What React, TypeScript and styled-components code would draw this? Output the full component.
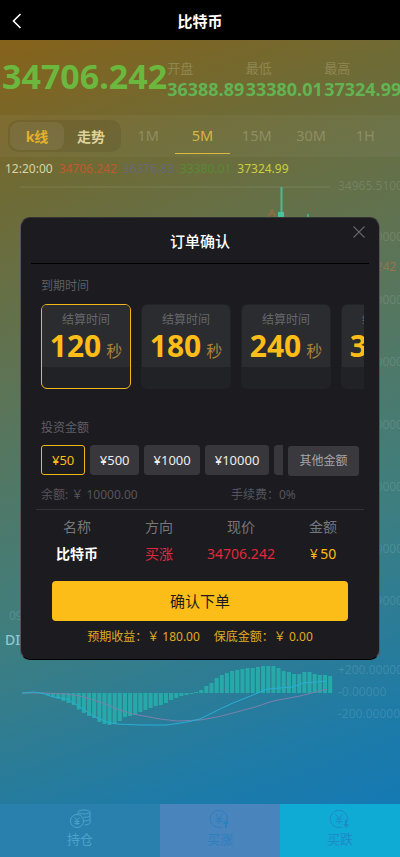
import React from "react";
import styled, { createGlobalStyle } from "styled-components";

const GlobalStyle = createGlobalStyle`
  html, body {
    margin: 0;
    padding: 0;
    background: #000;
  }
  * {
    box-sizing: border-box;
  }
  body {
    font-family: "Noto Sans", "Noto Sans CJK SC", sans-serif;
  }
`;

const Page = styled.div`
  position: relative;
  display: flex;
  flex-direction: column;
  width: 400px;
  height: 857px;
  overflow: hidden;
  background: #000;
`;
const Header = styled.div`
  position: relative;
  display: flex;
  align-items: center;
  justify-content: center;
  flex: 0 0 40px;
  color: #fff;
  font-size: 15px;
  font-weight: 700;
`;
const BackIcon = styled.svg`
  position: absolute;
  left: 11px;
  top: 13px;
`;
const Body = styled.div`
  display: flex;
  flex-direction: column;
  flex: 1;
  min-height: 0;
  background: linear-gradient(160deg, #86621a 0%, #6f6b35 16%, #5f7352 34%, #3f7e7e 62%, #1f7ba6 84%, #0f79bb 100%);
`;
const PriceRow = styled.div`
  display: flex;
  flex: 0 0 75px;
  padding: 11px 0 0 2px;
  overflow: hidden;
`;
const BigPrice = styled.div`
  flex: 0 0 165px;
  color: #6cb83f;
  font-size: 34px;
  font-weight: 700;
  line-height: 50px;
  white-space: nowrap;
`;
const Stat = styled.div`
  flex: 0 0 78.5px;
  padding-top: 7px;
`;
const StatLabel = styled.div`
  color: #8f8752;
  font-size: 13px;
  line-height: 20px;
`;
const StatValue = styled.div`
  color: #62b452;
  font-size: 18px;
  font-weight: 700;
  line-height: 23px;
  white-space: nowrap;
`;
const TabRow = styled.div`
  display: flex;
  align-items: stretch;
  flex: 0 0 42px;
  padding-left: 8px;
  background: rgba(255, 255, 255, 0.04);
`;
const Segment = styled.div`
  display: flex;
  align-items: center;
  width: 113px;
  height: 32px;
  margin-top: 5px;
  padding: 0 2px;
  border-radius: 10px;
  background: rgba(60, 50, 20, 0.14);
`;
const SegmentItem = styled.div<{ $active?: boolean }>`
  display: flex;
  align-items: center;
  justify-content: center;
  width: 54px;
  height: 28px;
  padding-bottom: 1px;
  border-radius: 9px;
  background: ${(p) => (p.$active ? "rgba(255, 255, 255, 0.07)" : "transparent")};
  color: ${(p) => (p.$active ? "#e3b12a" : "#ddd29c")};
  font-size: 14px;
  font-weight: 700;
`;
const Period = styled.div<{ $active?: boolean }>`
  display: flex;
  align-items: center;
  justify-content: center;
  width: 54.3px;
  height: 39px;
  padding-top: 2px;
  border-bottom: 1px solid ${(p) => (p.$active ? "#dcb93f" : "transparent")};
  color: ${(p) => (p.$active ? "#dcb440" : "#8f8d62")};
  font-size: 14.5px;
`;
const QuoteRow = styled.div`
  display: flex;
  align-items: center;
  flex: 0 0 22px;
  gap: 6px;
  padding: 0 0 0 5px;
  font-size: 12px;
  white-space: nowrap;
`;
const Quote = styled.span<{ $color: string }>`
  color: ${(p) => p.$color};
`;
const ChartArea = styled.div`
  flex: 1;
  min-height: 0;
`;
const ChartSvg = styled.svg`
  display: block;
  width: 400px;
  height: 625px;
`;
const TabBar = styled.div`
  display: grid;
  grid-template-columns: 160px 120px 120px;
  flex: 0 0 53px;
`;
const TabItem = styled.div<{ $bg: string; $color: string }>`
  display: flex;
  flex-direction: column;
  align-items: center;
  padding-top: 5px;
  background: ${(p) => p.$bg};
  color: ${(p) => p.$color};
  font-size: 13px;
  line-height: 20px;
`;

const Modal = styled.div`
  position: absolute;
  left: 20px;
  top: 217px;
  width: 360px;
  height: 443px;
  padding: 0 10px;
  border: 1px solid #55555a;
  border-bottom-color: #000;
  border-top-color: #333;
  border-radius: 10px;
  background: #1b1b20;
`;
const ModalTitle = styled.div`
  height: 46px;
  border-bottom: 1px solid #000;
  color: #fff;
  font-size: 15px;
  font-weight: 500;
  line-height: 46px;
  text-align: center;
`;
const CloseIcon = styled.svg`
  position: absolute;
  right: 13px;
  top: 7px;
`;
const Section = styled.div`
  padding: 0 0 0 10px;
`;
const SectionLabel = styled.div<{ $gap: number }>`
  padding-top: ${(p) => p.$gap}px;
  color: #5f5f63;
  font-size: 12px;
  line-height: 18px;
`;
const CardScroll = styled.div`
  display: flex;
  gap: 10px;
  width: 323px;
  margin-top: 9px;
  overflow: hidden;
`;
const Card = styled.div<{ $active?: boolean }>`
  flex: 0 0 90px;
  height: 85px;
  overflow: hidden;
  border: 1px solid ${(p) => (p.$active ? "#f0b81a" : "transparent")};
  border-radius: 6px;
  background: #212226;
`;
const CardTop = styled.div`
  display: flex;
  flex-direction: column;
  align-items: center;
  height: 62px;
  padding-top: 6px;
  background: #2b2c30;
  white-space: nowrap;
`;
const CardLabel = styled.div`
  color: #66666a;
  font-size: 12px;
  line-height: 18px;
`;
const CardValue = styled.div`
  margin-top: -1px;
  color: #fdbd18;
  font-size: 30px;
  font-weight: 700;
  line-height: 36px;
`;
const CardUnit = styled.span`
  margin-left: 5px;
  color: #a8843a;
  font-size: 16px;
  font-weight: 400;
`;
const AmountRow = styled.div`
  display: flex;
  align-items: flex-start;
  gap: 5px;
  margin-top: 8px;
`;
const ChipScroll = styled.div`
  display: flex;
  gap: 5px;
  flex: 0 0 242px;
  overflow: hidden;
`;
const Chip = styled.div<{ $active?: boolean }>`
  flex: 0 0 auto;
  height: 30px;
  padding: 0 ${(p) => (p.$active ? 10 : 8.5)}px;
  border: 1px solid ${(p) => (p.$active ? "#f0b81a" : "#37373c")};
  border-radius: 3px;
  background: ${(p) => (p.$active ? "transparent" : "#37373c")};
  color: ${(p) => (p.$active ? "#fdbd18" : "#eee")};
  font-size: 13px;
  line-height: 28px;
`;
const OtherButton = styled.div`
  flex: 0 0 71px;
  height: 30px;
  margin-top: 1px;
  border-radius: 3px;
  background: #39393e;
  color: #a5a5a8;
  font-size: 12px;
  line-height: 30px;
  text-align: center;
`;
const BalanceRow = styled.div`
  display: grid;
  grid-template-columns: 190px 1fr;
  margin-top: 10px;
  color: #55555a;
  font-size: 12px;
  line-height: 18px;
`;
const SummaryTable = styled.div`
  display: grid;
  grid-template-columns: repeat(4, 82px);
  width: 328px;
  margin: 5px 0 0 5px;
  border-top: 1px solid #333338;
  text-align: center;
`;
const SummaryHead = styled.div`
  padding-top: 7px;
  color: #77777b;
  font-size: 14px;
  line-height: 20px;
`;
const SummaryCell = styled.div<{ $color: string; $bold?: boolean }>`
  padding-top: 7px;
  color: ${(p) => p.$color};
  font-size: 14px;
  font-weight: ${(p) => (p.$bold ? 700 : 400)};
  line-height: 20px;
`;
const ConfirmButton = styled.div`
  width: 296px;
  height: 40px;
  margin: 17px 0 0 21px;
  border-radius: 4px;
  background: #fdbd18;
  color: #1b1b20;
  font-size: 15px;
  line-height: 40px;
  text-align: center;
`;
const ModalNote = styled.div`
  display: flex;
  justify-content: center;
  gap: 14px;
  margin-top: 7px;
  color: #e0ac22;
  font-size: 12px;
  line-height: 18px;
`;

const quotes = [
  { text: "12:20:00", color: "#d8d2ac" },
  { text: "34706.242", color: "#bf5a2e" },
  { text: "36376.83", color: "#67687a" },
  { text: "33380.01", color: "#578a35" },
  { text: "37324.99", color: "#c9cf3e" },
];
const periods = ["1M", "5M", "15M", "30M", "1H"];
const expiries = ["120", "180", "240", "300"];
const amounts = ["50", "500", "1000", "10000", "50000"];

// axis labels that stick out beside the dialog
const axisLabels = [
  { y: 191, text: "34965.5100" },
  { y: 242, text: "34816.0000" },
  { y: 305, text: "34666.0000" },
  { y: 367, text: "34516.0000" },
  { y: 430, text: "34366.0000" },
  { y: 492, text: "34216.0000" },
  { y: 554, text: "34066.0000" },
  { y: 606, text: "33916.9000" },
  { y: 675, text: "+200.00000" },
  { y: 697, text: "-0.00000" },
  { y: 719, text: "-200.00000" },
];
const macdDown = [2.5, 4, 5.6, 8, 10, 12, 16.5, 20, 23, 25, 29, 31, 32, 31, 28, 24, 23, 22, 19, 17, 15, 13, 12, 10, 7, 5, 3, 2, 1];
const macdUp = [1, 3, 7, 10, 15, 18, 20, 22, 23, 24, 25, 25, 26, 27, 27, 27, 25, 22, 21, 19, 19, 21, 21, 19, 18, 18, 17];
const difLine = "M22 694 L35 693 L45 695 L53 698 L67 700 L80 708 L93 717 L107 723 L117 725 L140 726 L167 726 L187 723 L200 720 L220 710 L233 704 L253 696 L267 690 L280 689 L293 688 L303 684 L327 682";
const deaLine = "M22 694 L45 694 L67 695 L80 697 L100 703 L117 710 L133 715 L160 720 L177 722 L200 721 L217 718 L233 714 L255 708 L273 702 L300 697 L327 690";

const Chart = () => (
  <ChartSvg viewBox="0 180 400 625">
    <line x1="20" y1="188" x2="330" y2="188" stroke="rgba(255,255,255,0.12)" />
    <rect x="280.5" y="188" width="2" height="28" fill="#4cb894" />
    <rect x="278" y="213" width="6" height="6" fill="#46c4a0" />
    <path d="M269 219 V215 H271 V211 H273 V215 H275 V219" fill="none" stroke="#a8683c" />
    <rect x="307" y="215" width="2" height="4" fill="#3fae8c" />

    {axisLabels.map((l) => (
      <text key={l.y} x="338" y={l.y} fontSize="12" fill="rgba(255,255,255,0.13)">{l.text}</text>
    ))}
    <text x="338" y="272" fontSize="12" fill="rgba(200,110,70,0.6)">34706.242</text>
    <text x="9" y="621" fontSize="12" fill="rgba(255,255,255,0.14)">09</text>
    <text x="5" y="646" fontSize="14" fontWeight="500" fill="#8fc7cf">DIF</text>

    {macdDown.map((h, i) => (
      <rect key={i} x={46 + i * 5.13} y="694" width="4" height={h} fill="#27a9a8" />
    ))}
    {macdUp.map((h, i) => (
      <rect key={i} x={194 + i * 5.16} y={694 - h} width="4" height={h} fill="#27a9a8" />
    ))}
    <path d={deaLine} fill="none" stroke="#7c80aa" strokeWidth="1" />
    <path d={difLine} fill="none" stroke="#2aaed6" strokeWidth="1" />
  </ChartSvg>
);

const CoinsIcon = () => (
  <svg width="22" height="20" viewBox="0 0 22 20" fill="none" stroke="currentColor" strokeWidth="1">
    <circle cx="8" cy="12" r="6.5" />
    <path d="M5.5 8.5 L8 11.5 L10.5 8.5 M8 11.5 V16 M5.5 12.5 H10.5 M5.5 14.5 H10.5" />
    <ellipse cx="15" cy="3" rx="6" ry="2" />
    <path d="M9 4 V6 M21 3 V14 C21 15 19 15.6 15.5 16 M21 6.5 C21 7.6 18 8.4 14.5 8.3 M21 10 C21 11.1 18 11.9 15 11.9" />
  </svg>
);
const YenArrowIcon: React.FC<{ down?: boolean }> = ({ down }) => (
  <svg width="22" height="20" viewBox="0 0 22 20" fill="none" stroke="currentColor" strokeWidth="1">
    <path d="M18.2 12.5 A8.7 8.7 0 1 0 12.5 18.2" />
    <path d="M6.5 5 L10 9.5 L13.5 5 M10 9.5 V15 M6.5 10 H13.5 M6.5 12.5 H13.5" />
    <path
      d={down ? "M16 11 H18 V15 H20 L17 19 L14 15 H16 Z" : "M17 11 L20 15 H18 V19 H16 V15 H14 Z"}
      fill="currentColor"
      stroke="none"
    />
  </svg>
);

export default function App() {
  return (
    <Page>
      <GlobalStyle />
      <Header>
        <BackIcon width="12" height="16" viewBox="0 0 12 16" fill="none" stroke="#fff" strokeWidth="1.6">
          <path d="M9.5 1 L2.5 8 L9.5 15" />
        </BackIcon>
        比特币
      </Header>
      <Body>
        <PriceRow>
          <BigPrice>34706.242</BigPrice>
          <Stat>
            <StatLabel>开盘</StatLabel>
            <StatValue>36388.89</StatValue>
          </Stat>
          <Stat>
            <StatLabel>最低</StatLabel>
            <StatValue>33380.01</StatValue>
          </Stat>
          <Stat>
            <StatLabel>最高</StatLabel>
            <StatValue>37324.99</StatValue>
          </Stat>
        </PriceRow>
        <TabRow>
          <Segment>
            <SegmentItem $active>k线</SegmentItem>
            <SegmentItem>走势</SegmentItem>
          </Segment>
          {periods.map((p) => (
            <Period key={p} $active={p === "5M"}>{p}</Period>
          ))}
        </TabRow>
        <QuoteRow>
          {quotes.map((q) => (
            <Quote key={q.text} $color={q.color}>{q.text}</Quote>
          ))}
        </QuoteRow>
        <ChartArea>
          <Chart />
        </ChartArea>
        <TabBar>
          <TabItem $bg="#2a80ac" $color="#4ba3cb">
            <CoinsIcon />
            持仓
          </TabItem>
          <TabItem $bg="#4a84bd" $color="#2b80bd">
            <YenArrowIcon />
            买涨
          </TabItem>
          <TabItem $bg="#10abd5" $color="#1e8ac7">
            <YenArrowIcon down />
            买跌
          </TabItem>
        </TabBar>
      </Body>

      <Modal>
        <ModalTitle>订单确认</ModalTitle>
        <CloseIcon width="14" height="14" viewBox="0 0 14 14" stroke="#66666a" strokeWidth="1.1">
          <path d="M1.5 1.5 L12.5 12.5 M12.5 1.5 L1.5 12.5" />
        </CloseIcon>
        <Section>
          <SectionLabel $gap={13}>到期时间</SectionLabel>
          <CardScroll>
            {expiries.map((e, i) => (
              <Card key={e} $active={i === 0}>
                <CardTop>
                  <CardLabel>结算时间</CardLabel>
                  <CardValue>
                    {e}
                    <CardUnit>秒</CardUnit>
                  </CardValue>
                </CardTop>
              </Card>
            ))}
          </CardScroll>
          <SectionLabel $gap={30}>投资金额</SectionLabel>
          <AmountRow>
            <ChipScroll>
              {amounts.map((a, i) => (
                <Chip key={a} $active={i === 0}>¥{a}</Chip>
              ))}
            </ChipScroll>
            <OtherButton>其他金额</OtherButton>
          </AmountRow>
          <BalanceRow>
            <span>余额: ￥ 10000.00</span>
            <span>手续费：0%</span>
          </BalanceRow>
        </Section>
        <SummaryTable>
          <SummaryHead>名称</SummaryHead>
          <SummaryHead>方向</SummaryHead>
          <SummaryHead>现价</SummaryHead>
          <SummaryHead>金额</SummaryHead>
          <SummaryCell $color="#fff" $bold>比特币</SummaryCell>
          <SummaryCell $color="#e0283f">买涨</SummaryCell>
          <SummaryCell $color="#e0283f">34706.242</SummaryCell>
          <SummaryCell $color="#fdbd18">¥&#8201;50</SummaryCell>
        </SummaryTable>
        <ConfirmButton>确认下单</ConfirmButton>
        <ModalNote>
          <span>预期收益：￥ 180.00</span>
          <span>保底金额：￥ 0.00</span>
        </ModalNote>
      </Modal>
    </Page>
  );
}
